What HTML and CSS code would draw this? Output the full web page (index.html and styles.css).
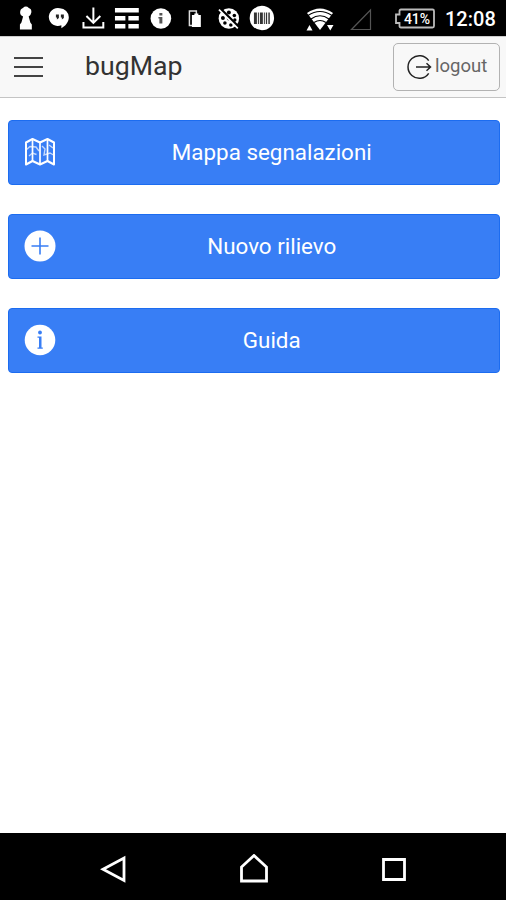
FILE: index.html
```
<!DOCTYPE html>
<html lang="it">
<head>
<meta charset="utf-8">
<title>bugMap</title>
<link rel="stylesheet" href="styles.css">
</head>
<body>
<div class="status">
  <div class="notifications">
    <svg viewBox="0 0 34 36"><path fill="#fff" d="M14 8q3-3 6 0 3 1 2.500 4.500-.5 3-2.700 4l1.700 6 1.500 2v5H11v-5l1.500-2 1.700-6q-3-1-3-4 0-3.500 2.800-4.500z"/></svg>
    <svg viewBox="0 0 34 36"><path fill="#fff" d="M17 8.200a9 9 0 0 1 9 9c0 5-3.500 9-7.500 11v-3A9 9 0 1 1 17 8.200z"/><path fill="#222" d="M13 14.500h3v3.500l-2 1.500v-2h-1zM18 14.500h3v3.500l-2 1.500v-2h-1z"/></svg>
    <svg viewBox="0 0 34 36"><path fill="none" stroke="#fff" stroke-width="2" d="M16.500 7.500v15M9.500 16l7 7 7-7M6.500 22v5.500h20V22"/></svg>
    <svg viewBox="0 0 34 36"><path fill="#fff" d="M5 8h24v4.500H5zM5 16h10.500v4.500H5zM18.500 16H29v4.500H18.500zM5 24h10.500v4.500H5zM18.500 24H29v4.500H18.500z"/></svg>
    <svg viewBox="0 0 34 36"><circle cx="17" cy="18.500" r="10.400" fill="#fff"/><path fill="#555" d="M15.500 13h3v2.500h-3zM14.500 17h4v6.500h-3v-5h-1z"/></svg>
    <svg viewBox="0 0 34 36"><path fill="none" stroke="#ddd" stroke-width="1.500" d="M14.500 25.500h-3V11h7v4"/><path fill="#fff" d="M14 15h2.500v-1.500h4V15h2.500v12h-9z"/></svg>
    <svg viewBox="0 0 34 36"><circle cx="17" cy="18.500" r="10.300" fill="#fff"/><g fill="#000"><circle cx="17" cy="12.500" r="2"/><circle cx="22.500" cy="15.500" r="1.800"/><circle cx="23" cy="20" r="1.700"/><circle cx="11" cy="18" r="2"/><circle cx="13" cy="23" r="1.800"/><circle cx="19" cy="25" r="1.800"/><circle cx="17" cy="18.500" r="2"/></g><path stroke="#000" stroke-width="3" d="M8 8.500l20 20"/><path stroke="#fff" stroke-width="1.700" d="M7 9.500l19 19"/></svg>
    <svg viewBox="0 0 34 36"><circle cx="17" cy="18" r="12.300" fill="#fff"/><path fill="#333" d="M9 12.500h3v11.500H9zM13 12.500h1v11.500h-1zM15 12.500h3v11.500h-3zM19 12.500h1v11.500h-1zM21 12.500h1.300v11.500H21zM23.500 12.500H25v11.500h-1.500z"/></svg>
  </div>
  <div class="system">
    <svg class="wifi" viewBox="0 0 30 36"><path fill="#fff" d="M2 13Q15 4 28 13L15 30z"/><path fill="none" stroke="#000" stroke-width="1.100" d="M3 15.500q12-8 24 0M6 19q9-6.500 18 0M9 22.500q6-4 12 0"/><path fill="#fff" d="M1.500 30.500h6L4.500 25zM22 25h6.500l-3.200 5.500z"/></svg>
    <svg class="signal" viewBox="0 0 22 36"><path fill="none" stroke="#555" stroke-width="1.200" d="M20.500 10v19.500H1.500z"/></svg>
    <div class="battery"><svg viewBox="0 0 42 22"><path fill="none" stroke="#bbb" stroke-width="1.800" d="M7 1.500h31.500q1.500 0 1.500 1.500v15q0 1.500-1.500 1.500H7q-1.500 0-1.500-1.500v-3H2V6.500h3.500V3q0-1.500 1.500-1.500z"/></svg><span>41%</span></div>
    <span class="clock">12:08</span>
  </div>
</div>
<header class="bar">
  <div class="menu"><i></i><i></i><i></i></div>
  <h1>bugMap</h1>
  <div class="logout"><svg viewBox="0 0 26 26"><path fill="none" stroke="#222" stroke-width="1.500" d="M21.700 6.700A11.300 11.300 0 1 0 21.700 19.300M9 13h14M19.500 9.300l4 3.700-4 3.700"/></svg><span>logout</span></div>
</header>
<main class="content">
  <div class="button"><svg viewBox="0 0 32 32"><path fill="none" stroke="#fff" stroke-width="2" stroke-linejoin="round" d="M2 6.500l6.500-3.500 7.500 3.500 7.500-3.500L30 6.500v22L23.500 25 16 28.500 8.500 25 2 28.500z"/><path fill="none" stroke="#fff" stroke-width="1.700" d="M8.500 3v22M16 6v22.500M23.500 3v22"/><path fill="none" stroke="#fff" stroke-opacity=".7" stroke-width="1.400" d="M2 14l4-3.500 6 .5 3 4M5 20l3.500-3 4 1.500M18 10l3 3-1 6 6-2 3.500 2M25 9l4 3"/></svg><span>Mappa segnalazioni</span></div>
  <div class="button"><svg viewBox="0 0 32 32"><circle cx="16" cy="16" r="15.500" fill="#fff"/><path stroke="#387ef5" stroke-width="1.600" d="M16 7.500v17M7.500 16h17"/></svg><span>Nuovo rilievo</span></div>
  <div class="button"><svg viewBox="0 0 32 32"><circle cx="16" cy="16" r="15.300" fill="#fff"/><circle cx="16" cy="8.500" r="1.900" fill="#387ef5"/><path fill="#387ef5" d="M13.500 12.500h4v11h1.300v1.300h-5.300v-1.300h1.500v-9.700h-1.500z"/></svg><span>Guida</span></div>
</main>
<nav class="navbar">
  <svg viewBox="0 0 32 32"><path fill="none" stroke="#fff" stroke-width="2.800" d="M26 4v22.500L5 15.200z"/></svg>
  <svg viewBox="0 0 32 32"><path fill="none" stroke="#fff" stroke-width="2.800" d="M3.500 27V13L16 1.500 28.500 13v14z"/></svg>
  <svg viewBox="0 0 32 32"><path fill="none" stroke="#fff" stroke-width="2.800" d="M5.500 5.500h21v20h-21z"/></svg>
</nav>
</body>
</html>
```
FILE: styles.css
```
* { box-sizing: border-box; }
body {
  margin: 0;
  height: 900px;
  display: flex;
  flex-direction: column;
  background: #fff;
  font-family: Roboto, "Liberation Sans", sans-serif;
  overflow: hidden;
}
svg { display: block; flex: none; }
.status {
  height: 36px;
  background: #000;
  color: #fff;
  display: flex;
  justify-content: space-between;
  padding: 0 11px 0 9px;
  flex: none;
}
.notifications { display: flex; }
.notifications svg { width: 33.75px; height: 36px; }
.system { display: flex; align-items: center; }
.wifi { width: 30px; height: 36px; margin-right: 15px; }
.signal { width: 22px; height: 36px; margin-right: 22px; }
.battery { width: 42px; height: 22px; display: grid; margin: 2px 9px 0 0; }
.battery svg, .battery span { grid-area: 1 / 1; }
.battery svg { width: 42px; height: 22px; }
.battery span {
  font-size: 14px;
  font-weight: 500;
  line-height: 22px;
  text-align: center;
  padding-left: 4px;
}
.clock { font-size: 20px; font-weight: 500; line-height: 36px; width: 50px; white-space: nowrap; padding-top: 2px; }
.bar {
  height: 62px;
  flex: none;
  background: #f8f8f8;
  border-top: 1px solid #ccc;
  border-bottom: 1px solid #c4c4c4;
  display: flex;
  align-items: center;
  padding: 0 6px 0 14px;
}
.menu { width: 29px; height: 20px; display: flex; flex-direction: column; justify-content: space-between; }
.menu i { height: 2px; background: #444; }
.bar h1 { margin: 0 auto 0 42px; font-size: 26.700px; line-height: 30px; font-weight: 400; color: #333; padding-bottom: 2px; }
.logout {
  width: 107px;
  height: 48px;
  border: 1px solid #b2b2b2;
  border-radius: 5px;
  display: flex;
  align-items: center;
  padding-left: 13px;
  color: #666;
  font-size: 18.500px;
  font-weight: 400;
}
.logout svg { width: 26px; height: 26px; margin-right: 2px; }
.logout span { padding-bottom: 3px; }
.content { flex: 1; display: flex; flex-direction: column; gap: 28.500px; padding: 21.500px 6.500px 0 8px; }
.button {
  height: 65.500px;
  flex: none;
  border: 1px solid #1c6cf0;
  border-radius: 4px;
  background: #387ef5;
  color: #fff;
  display: flex;
  align-items: center;
  padding: 0 11px 0 15px;
  font-size: 22.400px;
}
.button svg { width: 32px; height: 32px; }
.button span { flex: 1; text-align: center; }
.navbar { height: 67px; flex: none; background: #000; display: flex; justify-content: center; gap: 108px; padding: 21px 0 0 2px; }
.navbar svg { width: 32px; height: 32px; }
```
